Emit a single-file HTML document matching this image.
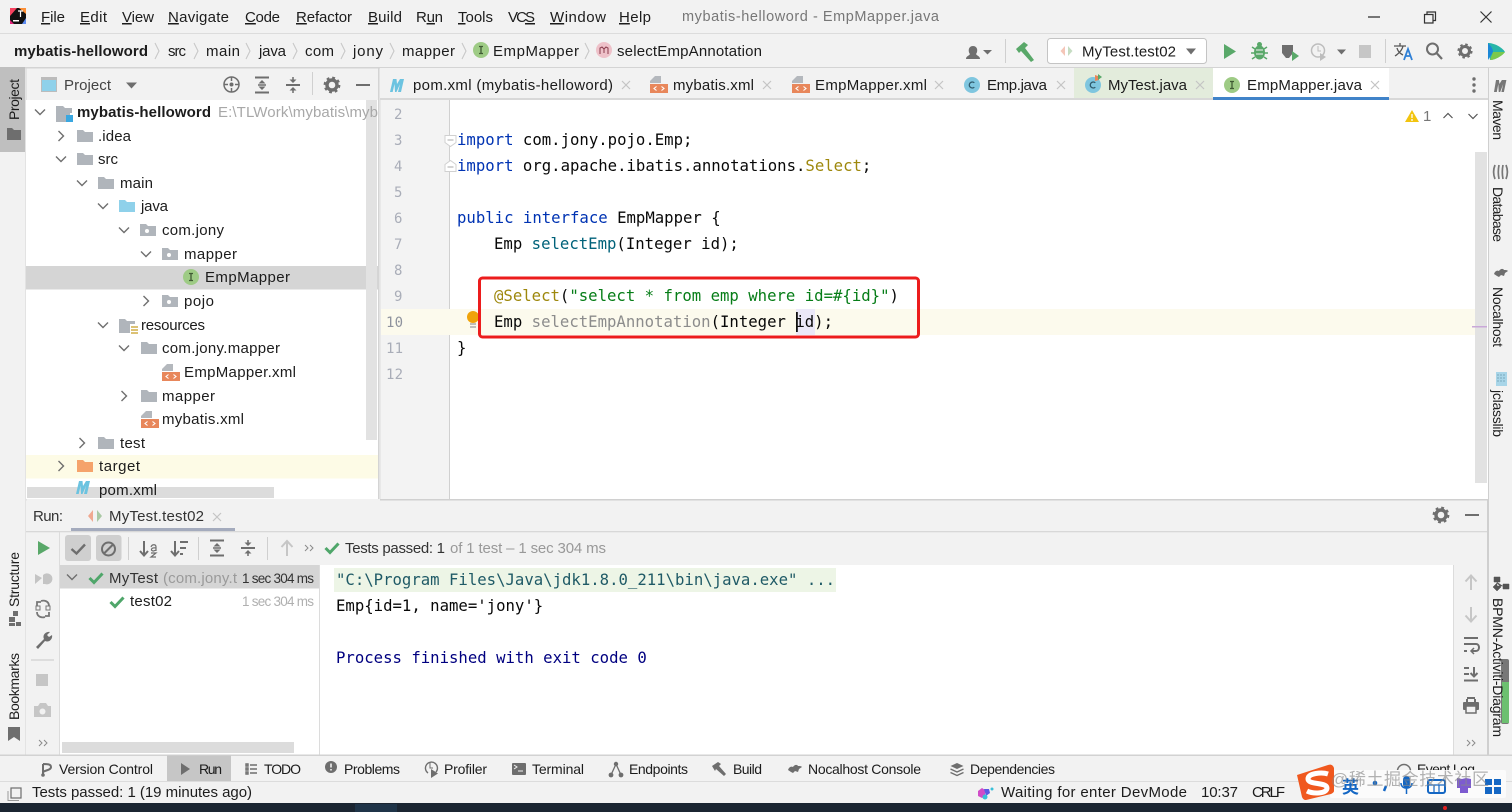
<!DOCTYPE html>
<html><head><meta charset="utf-8"><title>mybatis-helloword - EmpMapper.java</title>
<style>
html,body{margin:0;padding:0;background:#f2f2f2;overflow:hidden}
svg{display:block;position:absolute;left:0;top:0}
text{font-family:"Liberation Sans","Noto Sans CJK SC",sans-serif;font-size:15px;fill:#1c1c1c;white-space:pre}
.m{font-family:"DejaVu Sans Mono","Liberation Mono",monospace;font-size:15.65px;fill:#080808}
.n{font-family:"DejaVu Sans Mono","Liberation Mono",monospace;font-size:14px;fill:#a9adb8}
.b{font-size:14px}
.k{fill:#0033b3}.s{fill:#067d17}.a{fill:#9e880d}.f{fill:#00627a}.g{fill:#8c8c8c}
.u{text-decoration:underline}
.i{fill:#6e6e6e}
</style></head><body>
<svg width="1512" height="812" viewBox="0 0 1512 812" xmlns="http://www.w3.org/2000/svg">
<defs>
<path id="fo" d="M0 0h6l2 2h8v10H0z" fill="#b0b5bb"/>
<g id="pk"><path d="M0 0h6l2 2h8v10H0z" fill="#b0b5bb"/><circle cx="7" cy="7" r="2" fill="#fff"/></g>
<g id="xm"><path d="M5 0h6v7H0V5z" fill="#b4b8bd"/><rect x="0" y="8" width="18" height="9" fill="#e8875b"/><path d="M6.500 10.500l-2.500 2 2.500 2M11.500 10.500l2.500 2-2.500 2" stroke="#fff" stroke-width="1.100" fill="none"/></g>
<g id="ii"><circle cx="8" cy="8" r="8" fill="#9ecb85"/><path d="M6 4.500h4M6 11.500h4M8 4.500v7" stroke="#3f5a33" stroke-width="1.300"/></g>
<g id="cc"><circle cx="8" cy="8" r="8" fill="#7fc6df"/><path d="M10.300 5.800a3 3 0 1 0 0 4.400" stroke="#2f5a6c" stroke-width="1.300" fill="none"/></g>
<path id="cd" d="M-5-2.500L0 2.500 5-2.500" stroke="#6e6e6e" stroke-width="1.400" fill="none"/>
<path id="cr" d="M-2.500-5L2.500 0-2.500 5" stroke="#6e6e6e" stroke-width="1.400" fill="none"/>
<path id="tx" d="M-4-4L4 4M4-4L-4 4" stroke="#c4c4c4" stroke-width="1.200" fill="none"/>
<path id="ck" d="M-6.500 0L-2 4.500 6.500-4.500" stroke="#4fa66a" stroke-width="3" fill="none"/>
<path id="mm" d="M0 15L3 2h3.500L7 7l3-5h4l-3 13H8l2-8-3.500 8H5l-.5-8-1.800 8z" fill="#6cc3e0"/>
<g id="gr"><circle r="5" fill="none" stroke="#6e6e6e" stroke-width="3.400"/><circle r="7.200" fill="none" stroke="#6e6e6e" stroke-width="2.400" stroke-dasharray="2.800 2.850"/></g>
<g id="ex"><path d="M-7-7.500H7M-7 7.500H7" stroke="#6e6e6e" stroke-width="2"/><path d="M0-5l-3.500 3.500h7zM0 5l-3.500-3.500h7z" fill="#6e6e6e"/><path d="M-4 0H4" stroke="#6e6e6e" stroke-width="1.500"/></g>
<g id="co"><path d="M-7 0H7" stroke="#6e6e6e" stroke-width="2"/><path d="M0-2l-3.500-3.500h7zM0 2l-3.500 3.500h7z" fill="#6e6e6e"/><path d="M0-8v3M0 8V5" stroke="#6e6e6e" stroke-width="1.500"/></g>
<path id="dd" d="M-4-3L-1 0-4 3M1-3L4 0 1 3" stroke="#8a8a8a" stroke-width="1" fill="none"/>
</defs>

<!-- base -->
<rect width="1512" height="812" fill="#f2f2f2"/>
<rect x="0" y="33" width="1512" height="1" fill="#dcdcdc"/>
<rect x="0" y="67" width="1512" height="1.500" fill="#d4d4d4"/>

<!-- title bar -->
<g transform="translate(10,8)"><rect x="0" y="0" width="16" height="16" fill="#111"/><path d="M0 0h7L0 8z" fill="#f6425f"/><path d="M9 0h7v6z" fill="#fc8f36"/><path d="M0 12l4 4H0z" fill="#e3247b"/><path d="M12 16h4v-6z" fill="#5d8cf2"/><rect x="3" y="12" width="6" height="1.500" fill="#fff"/><path d="M8 3h5M10.500 3v6" stroke="#fff" stroke-width="1.200"/></g>
<text x="41" y="22" textLength="24"><tspan class="u">F</tspan>ile</text>
<text x="80" y="22" textLength="27"><tspan class="u">E</tspan>dit</text>
<text x="122" y="22" textLength="32"><tspan class="u">V</tspan>iew</text>
<text x="168" y="22" textLength="61"><tspan class="u">N</tspan>avigate</text>
<text x="245" y="22" textLength="35"><tspan class="u">C</tspan>ode</text>
<text x="296" y="22" textLength="56"><tspan class="u">R</tspan>efactor</text>
<text x="368" y="22" textLength="34"><tspan class="u">B</tspan>uild</text>
<text x="416" y="22" textLength="27">R<tspan class="u">u</tspan>n</text>
<text x="458" y="22" textLength="35"><tspan class="u">T</tspan>ools</text>
<text x="508" y="22" textLength="27">VC<tspan class="u">S</tspan></text>
<text x="550" y="22" textLength="56"><tspan class="u">W</tspan>indow</text>
<text x="619" y="22" textLength="32"><tspan class="u">H</tspan>elp</text>
<text x="682" y="21" textLength="257" style="fill:#777;font-size:14.500px">mybatis-helloword - EmpMapper.java</text>
<path d="M1368 17h12" stroke="#333" stroke-width="1.300"/>
<path d="M1424.500 14.500h8.500v8.500h-8.500zM1427 14.500V12h8.500v8.500H1433" stroke="#333" stroke-width="1.200" fill="none"/>
<path d="M1480.500 11.500l11 11M1491.500 11.500l-11 11" stroke="#333" stroke-width="1.200"/>

<!-- breadcrumb -->
<text x="14" y="56" textLength="134" style="font-weight:700">mybatis-helloword</text>
<text x="168" y="56" textLength="18">src</text>
<text x="206" y="56" textLength="34">main</text>
<text x="259" y="56" textLength="27">java</text>
<text x="305" y="56" textLength="29">com</text>
<text x="353" y="56" textLength="30">jony</text>
<text x="402" y="56" textLength="53">mapper</text>
<text x="493" y="56" textLength="86">EmpMapper</text>
<text x="617" y="56" textLength="145">selectEmpAnnotation</text>
<g fill="none" stroke="#c8c8c8" stroke-width="1.100"><path d="M155 43l4 8-4 8M194 43l4 8-4 8M246 43l4 8-4 8M293 43l4 8-4 8M341 43l4 8-4 8M390 43l4 8-4 8M462 43l4 8-4 8M585 43l4 8-4 8"/></g>
<use href="#ii" x="473" y="42"/>
<circle cx="604" cy="50" r="8" fill="#eec1c9"/><path d="M600 54v-6l2-1 2 2 2-2 2 1v6M604 49v4" stroke="#8a3b4b" stroke-width="1" fill="none"/>

<!-- main toolbar -->
<path d="M966 59c0-3 3-3 4-5-2-2-2-8 3-8s5 6 3 8c1 2 4 2 4 5z" fill="#6e6e6e"/><path d="M983 50l4.500 4.500L992 50z" fill="#6e6e6e"/>
<rect x="1005" y="39" width="1" height="24" fill="#cfcfcf"/>
<path d="M1016 49l8-7 4 3-3 3 9 12-3 2-10-11-2 2z" fill="#59a869"/>
<rect x="1047.500" y="38.500" width="159" height="25" rx="3" fill="#fff" stroke="#c4c4c4"/>
<path d="M1065 46l-4.500 5 4.500 5z" fill="#f4c6b8"/><path d="M1068 46l4.500 5-4.500 5z" fill="#c5dcc2"/>
<text x="1082" y="56.500" textLength="94">MyTest.test02</text>
<path d="M1186 48.500h10l-5 6z" fill="#6e6e6e"/>
<path d="M1224 44v15l12-7.500z" fill="#59a869"/>
<g fill="#59a869"><ellipse cx="1259.500" cy="52.500" rx="5.500" ry="7"/><circle cx="1259.500" cy="44.500" r="2.500"/></g><path d="M1252 47l3 2M1267 47l-3 2M1251 53h4M1268 53h-4M1252 59l3-2M1267 59l-3-2" stroke="#59a869" stroke-width="1.500"/><path d="M1256 50h7M1256 54h7" stroke="#f2f2f2"/>
<path d="M1282 45h11v8l-4 5h-3l-4-5z" fill="#6e6e6e"/><path d="M1292 51v10l7-5z" fill="#59a869"/>
<circle cx="1318" cy="50.500" r="6.500" fill="none" stroke="#bdbdbd" stroke-width="1.500"/><path d="M1318 46v5h3" stroke="#bdbdbd" fill="none"/><path d="M1320 53v8l6-4z" fill="#bdbdbd"/>
<path d="M1337 49.500h9l-4.500 5z" fill="#6e6e6e"/>
<rect x="1359" y="45" width="12" height="13" fill="#c6c6c6"/>
<rect x="1385" y="39" width="1" height="24" fill="#cfcfcf"/>
<path d="M1394 46h12M1400 43v3M1403 46c-1 5-5 8-8 10M1397 48c1 4 4 6 6 7" stroke="#555" stroke-width="1.300" fill="none"/><path d="M1404 60l4-11 4 11M1405.500 56h5" stroke="#2f80d6" stroke-width="1.800" fill="none"/>
<circle cx="1432.500" cy="49" r="5.500" fill="none" stroke="#6e6e6e" stroke-width="2"/><path d="M1437 53.500l5 5.500" stroke="#6e6e6e" stroke-width="2.200"/>
<g transform="translate(1465,51) scale(.9)"><use href="#gr"/></g>
<path d="M1488 43c6 0 14 4 17 9-3 4-10 8-15 8z" fill="#28b6a8"/><path d="M1488 43c3 3 5 6 5 9l-5 8z" fill="#1b87d6"/><path d="M1493 52l12 0c-3 4-10 8-15 8z" fill="#7cc84c"/>

<!-- left strip -->
<rect x="25.500" y="68" width="1" height="687" fill="#d4d4d4"/>
<rect x="0" y="67" width="25" height="85" fill="#bfbfbf"/>
<text class="b" transform="translate(19,120) rotate(-90)" textLength="41">Project</text>
<path d="M7 128h5l2 2h7v10H7z" fill="#6e6e6e"/>
<text class="b" transform="translate(19,607) rotate(-90)" textLength="55">Structure</text>
<path d="M9 622h6v-5H9zM9 626h6v-3H9zM16 626h5v-4h-5zM13 616h5v-5h-5z" fill="#6e6e6e"/>
<text class="b" transform="translate(19,720) rotate(-90)" textLength="67">Bookmarks</text>
<path d="M8 727h12v14l-6-4-6 4z" fill="#6e6e6e"/>

<!-- project panel -->
<rect x="26" y="100" width="352" height="399" fill="#fff"/>
<rect x="41" y="77" width="16" height="15" fill="#bcbcbc"/><rect x="42" y="80" width="14" height="11" fill="#8fd1ea"/>
<text x="64" y="90" textLength="47" style="fill:#444">Project</text>
<path d="M126 82.500h11l-5.500 6z" fill="#6e6e6e"/>
<circle cx="231.500" cy="84.500" r="7.500" fill="none" stroke="#6e6e6e" stroke-width="1.500"/><circle cx="231.500" cy="84.500" r="2" class="i"/><path d="M231.500 77v4M231.500 88v4M224 84.500h4M235 84.500h4" stroke="#6e6e6e" stroke-width="1.500"/>
<use href="#ex" x="262" y="85"/><use href="#co" x="293" y="85"/>
<rect x="312" y="72" width="1" height="23" fill="#d0d0d0"/>
<use href="#gr" x="332" y="85"/>
<path d="M356 85h14" stroke="#6e6e6e" stroke-width="2"/>
<rect x="378" y="68" width="1.500" height="431" fill="#d4d4d4"/>

<rect x="26" y="266" width="352" height="23.500" fill="#d5d5d5"/>
<rect x="26" y="455" width="352" height="23.500" fill="#fdfbe6"/>
<rect x="366" y="100" width="11" height="340" fill="#e2e2e2"/>

<g>
<use href="#cd" x="40" y="112"/><use href="#cr" x="61" y="136"/><use href="#cd" x="61" y="159"/><use href="#cd" x="82" y="183"/><use href="#cd" x="103" y="206"/><use href="#cd" x="124" y="230"/><use href="#cd" x="146" y="254"/><use href="#cr" x="146" y="301"/><use href="#cd" x="103" y="325"/><use href="#cd" x="124" y="348"/><use href="#cr" x="124" y="396"/><use href="#cr" x="82" y="443"/><use href="#cr" x="61" y="466"/>
</g>
<path d="M56 106h7l2 2h7v5h-2v9H56z" fill="#b0b5bb"/><rect x="66" y="115" width="7" height="7" fill="#3aa7e0"/>
<use href="#fo" x="77" y="130"/><use href="#fo" x="77" y="153"/><use href="#fo" x="98" y="177"/>
<path d="M119 200h6l2 2h8v10h-16z" fill="#8fd1ea"/>
<use href="#pk" x="140" y="224"/><use href="#pk" x="162" y="248"/><use href="#ii" x="183" y="269"/><use href="#pk" x="162" y="295"/>
<path d="M119 319h6l2 2h8v3h-5v9h-11z" fill="#b0b5bb"/><path d="M131 327h7M131 330h7M131 333h7" stroke="#d8b960" stroke-width="1.800"/>
<use href="#fo" x="141" y="342"/><use href="#xm" x="162" y="364"/><use href="#fo" x="141" y="390"/><use href="#xm" x="141" y="411"/><use href="#fo" x="98" y="437"/>
<path d="M77 460h6l2 2h8v10H77z" fill="#f5a36b"/>

<text x="77" y="117" textLength="134" style="font-weight:700">mybatis-helloword</text>
<text x="218" y="117" textLength="160" style="fill:#a8a8a8">E:\TLWork\mybatis\myb</text>
<text x="98" y="141" textLength="33">.idea</text>
<text x="98" y="164" textLength="20">src</text>
<text x="120" y="188" textLength="33">main</text>
<text x="141" y="211" textLength="27">java</text>
<text x="162" y="235" textLength="62">com.jony</text>
<text x="184" y="259" textLength="53">mapper</text>
<text x="205" y="282" textLength="85">EmpMapper</text>
<text x="184" y="306" textLength="30">pojo</text>
<text x="141" y="330" textLength="64">resources</text>
<text x="162" y="353" textLength="118">com.jony.mapper</text>
<text x="184" y="377" textLength="112">EmpMapper.xml</text>
<text x="162" y="401" textLength="53">mapper</text>
<text x="162" y="424" textLength="82">mybatis.xml</text>
<text x="120" y="448" textLength="25">test</text>
<text x="99" y="471" textLength="41">target</text>
<rect x="27" y="487" width="247" height="11" fill="#dcdcdc"/>
<use href="#mm" x="76" y="479"/>
<text x="99" y="495" textLength="58">pom.xml</text>

<!-- tabs -->
<rect x="380" y="68" width="1108" height="30" fill="#f2f2f2"/>
<rect x="1074" y="68" width="139" height="30" fill="#e3ecdc"/>
<rect x="1213" y="68" width="176" height="29" fill="#fff"/>
<rect x="380" y="98" width="1108" height="2" fill="#d8d8d8"/>
<rect x="1213" y="97" width="176" height="3.500" fill="#4083c9"/>
<use href="#mm" x="390" y="77"/>
<text x="413" y="90" textLength="200">pom.xml (mybatis-helloword)</text><use href="#tx" x="626" y="85"/>
<use href="#xm" x="650" y="76"/>
<text x="673" y="90" textLength="81">mybatis.xml</text><use href="#tx" x="767" y="85"/>
<use href="#xm" x="792" y="76"/>
<text x="815" y="90" textLength="112">EmpMapper.xml</text><use href="#tx" x="939" y="85"/>
<use href="#cc" x="964" y="77"/>
<text x="987" y="90" textLength="60">Emp.java</text><use href="#tx" x="1061" y="85"/>
<use href="#cc" x="1085" y="77"/><path d="M1095 75l3 1 1 4-4 1z" fill="#e8875b"/><path d="M1098 74l4 3-4 3z" fill="#59a869"/>
<text x="1108" y="90" textLength="79">MyTest.java</text><use href="#tx" x="1200" y="85"/>
<use href="#ii" x="1224" y="77"/>
<text x="1247" y="90" textLength="115">EmpMapper.java</text><use href="#tx" x="1375" y="85"/>
<g class="i"><circle cx="1474" cy="79" r="1.700"/><circle cx="1474" cy="85" r="1.700"/><circle cx="1474" cy="91" r="1.700"/></g>

<!-- editor -->
<rect x="380" y="100" width="1108" height="399" fill="#fff"/>
<rect x="380" y="100" width="69" height="399" fill="#f3f3f3"/>
<rect x="449" y="100" width="1" height="399" fill="#d0d0d0"/>
<rect x="380" y="309" width="1096" height="26" fill="#fcfaed"/>
<rect x="1475" y="152" width="12" height="331" fill="#e2e2e2"/>
<rect x="1472" y="326" width="15" height="1.500" fill="#c9a8d8"/>
<rect x="380" y="499" width="1132" height="1.500" fill="#d0d0d0"/>
<rect x="380" y="100" width="1" height="399" fill="#e8e8e8"/>

<text class="n" x="394" y="119">2</text>
<text class="n" x="394" y="145">3</text>
<text class="n" x="394" y="171">4</text>
<text class="n" x="394" y="197">5</text>
<text class="n" x="394" y="223">6</text>
<text class="n" x="394" y="249">7</text>
<text class="n" x="394" y="275">8</text>
<text class="n" x="394" y="301">9</text>
<text class="n" x="386" y="327" textLength="17" style="fill:#8f939e">10</text>
<text class="n" x="386" y="353" textLength="17">11</text>
<text class="n" x="386" y="379" textLength="17">12</text>

<path d="M445 135.500h11v7l-5.500 4-5.500-4z" fill="#fff" stroke="#d0d0d0"/><path d="M447.500 140h6" stroke="#aaa"/>
<path d="M445 171.500h11v-7l-5.500-4-5.500 4z" fill="#fff" stroke="#d0d0d0"/><path d="M447.500 167h6" stroke="#aaa"/>

<rect x="796" y="309" width="19" height="26" fill="#ebe8f8"/>
<text class="m" x="457" y="145"><tspan class="k">import</tspan> com.jony.pojo.Emp;</text>
<text class="m" x="457" y="171"><tspan class="k">import</tspan> org.apache.ibatis.annotations.<tspan class="a">Select</tspan>;</text>
<text class="m" x="457" y="223"><tspan class="k">public interface</tspan> EmpMapper {</text>
<text class="m" x="494" y="249">Emp <tspan class="f">selectEmp</tspan>(Integer id);</text>
<text class="m" x="494" y="301"><tspan class="a">@Select</tspan>(<tspan class="s">"select * from emp where id=#{id}"</tspan>)</text>
<text class="m" x="494" y="327">Emp <tspan class="g">selectEmpAnnotation</tspan>(Integer id);</text>
<rect x="796" y="312" width="1.800" height="20" fill="#111"/>
<text class="m" x="457" y="353">}</text>
<circle cx="473" cy="317" r="6" fill="#f0a30a"/><path d="M470 324h6M470 327h6" stroke="#9a9a9a" stroke-width="1.300"/>
<rect x="479.500" y="278" width="439" height="59" rx="3" fill="none" stroke="#ec1c1c" stroke-width="3"/>

<path d="M1405 122l7-12 7 12z" fill="#f2c40f"/><path d="M1412 114v4M1412 119v2" stroke="#fff" stroke-width="1.300"/>
<text x="1423" y="121" textLength="7" style="fill:#777">1</text>
<path d="M1443.500 118l4.500-4.500 4.500 4.500M1468.500 114l4.500 4.500 4.500-4.500" stroke="#555" stroke-width="1.200" fill="none"/>

<!-- right strip -->
<rect x="1488" y="68" width="24" height="687" fill="#f2f2f2"/>
<rect x="1488" y="68" width="1" height="687" fill="#cfcfcf"/>
<path d="M1494 92l2-12h3l.4 4 2.500-4h3.500l1-0-2.500 12h-2.500l1.800-8-3 8h-1.500l-.4-8-1.500 8z" fill="#777"/>
<text class="b" transform="translate(1493,100) rotate(90)" textLength="40">Maven</text>
<g fill="none" stroke="#777" stroke-width="1.700"><path d="M1495 165c-2 5-2 9 0 14M1499 165c-1 5-1 9 0 14M1503 165c-1 5-1 9 0 14M1506 165c2 5 2 9 0 14"/></g>
<text class="b" transform="translate(1493,187) rotate(90)" textLength="55">Database</text>
<path d="M1494 274c1-3 3-4 5-3 1-2 4-3 5-1 2 0 3 0 4 1l-3 2-1 3-3-1-2 2-2-1z" fill="#6e6e6e"/>
<text class="b" transform="translate(1493,287) rotate(90)" textLength="60">Nocalhost</text>
<rect x="1496" y="372" width="11" height="14" fill="#a8d5e8"/><path d="M1497 375h9M1497 378h9M1497 381h9" stroke="#7aa9bd" stroke-dasharray="2 1"/>
<text class="b" transform="translate(1493,390) rotate(90)" textLength="47">jclasslib</text>
<path d="M1494 577h6v5h-6zM1503 584h6v5h-6zM1497 582v4h6M1497 583l4 4-4 4-4-4z" fill="#555" stroke="#555" stroke-width=".5"/>
<rect x="1501" y="659" width="8" height="65" rx="2" fill="#777"/>
<rect x="1502" y="682" width="7" height="41" fill="#6cc070"/>
<text class="b" transform="translate(1493,598) rotate(90)" textLength="139">BPMN-Activiti-Diagram</text>

<!-- run panel -->
<rect x="26" y="500.500" width="1461" height="254.500" fill="#f2f2f2"/>
<rect x="26" y="531" width="1461" height="1.300" fill="#d8d8d8"/>
<rect x="1487" y="500" width="1.300" height="255" fill="#cfcfcf"/>
<text x="33" y="521" textLength="30" style="fill:#333">Run:</text>
<path d="M93 510l-5 6 5 6z" fill="#f0a890"/><path d="M97 510l5 6-5 6z" fill="#a9c8a4"/>
<text x="109" y="521" textLength="95" style="fill:#333">MyTest.test02</text><use href="#tx" x="217" y="517"/>
<rect x="71" y="528" width="164" height="3" fill="#a4abbd"/>
<use href="#gr" x="1441" y="515"/><path d="M1465 515h14" stroke="#6e6e6e" stroke-width="2"/>

<rect x="59" y="532" width="1" height="223" fill="#dcdcdc"/>
<path d="M38 541v14l12-7z" fill="#59a869"/>
<path d="M35 574l7 4-7 6zM43 575a5.500 5.500 0 1 1 2 9l-2 0z" fill="#c4c4c4"/>
<path d="M37 606v-4h4M37 612c0 5 5 6 8 5M49 606c0-5-5-6-8-5M49 612v4h-4" stroke="#777" stroke-width="1.800" fill="none"/><rect x="36" y="606" width="4" height="4" fill="none" stroke="#777"/><rect x="46" y="606" width="4" height="4" fill="none" stroke="#777"/>
<path d="M36 647l8-8c-2-4 2-8 6-7l-3 3 2 2 3-2c1 4-3 8-7 6l-7 8z" fill="#6e6e6e"/>
<rect x="31" y="659.500" width="23" height="1" fill="#c8c8c8"/>
<rect x="36" y="674" width="12" height="12" fill="#c6c6c6"/>
<path d="M34 706h4l2-3h6l2 3h3v11H34z" fill="#c6c6c6"/><circle cx="42.500" cy="711.500" r="3" fill="#f2f2f2"/>
<use href="#dd" x="43" y="743"/>

<rect x="65" y="535" width="26" height="26" rx="3" fill="#cfcfcf"/>
<path d="M71.500 549l5 4.500 8.500-9" stroke="#6e6e6e" stroke-width="2.400" fill="none"/>
<rect x="96" y="535" width="25.500" height="26" rx="3" fill="#cfcfcf"/>
<circle cx="108.500" cy="549" r="6.500" fill="none" stroke="#6e6e6e" stroke-width="2"/><path d="M104 553.500l9-9" stroke="#6e6e6e" stroke-width="2"/>
<rect x="128" y="537" width="1" height="23" fill="#cfcfcf"/>
<path d="M144 541v14M140 551l4 4.500 4-4.500" stroke="#6e6e6e" stroke-width="2" fill="none"/><path d="M151 547c1-3 5-3 5 0v4M156 548c-5-1-6 3-2.500 3l2.500-1M151 553h5l-5 4h5" stroke="#6e6e6e" stroke-width="1.200" fill="none"/>
<path d="M175 541v14M171 551l4 4.500 4-4.500" stroke="#6e6e6e" stroke-width="2" fill="none"/><path d="M180 542h8M180 548h6M180 554h3" stroke="#6e6e6e" stroke-width="2"/>
<rect x="198" y="537" width="1" height="23" fill="#cfcfcf"/>
<use href="#ex" x="217" y="548"/><use href="#co" x="248" y="548"/>
<rect x="267" y="537" width="1" height="23" fill="#cfcfcf"/>
<path d="M287 556v-14M281.500 547l5.500-6 5.500 6" stroke="#c6c6c6" stroke-width="2" fill="none"/>
<use href="#dd" x="309" y="548"/>
<use href="#ck" x="332" y="548"/>
<text x="345" y="553" textLength="100" style="fill:#333">Tests passed: 1</text>
<text x="450" y="553" textLength="156" style="fill:#999">of 1 test – 1 sec 304 ms</text>

<rect x="60" y="565" width="259" height="190" fill="#fff"/>
<rect x="60" y="565" width="259" height="23.500" fill="#d5d5d5"/>
<rect x="319" y="565" width="1" height="190" fill="#dcdcdc"/>
<use href="#cd" x="72" y="577"/>
<use href="#ck" x="96" y="578"/>
<text x="109" y="583" textLength="49" style="fill:#333">MyTest</text>
<text x="163" y="583" textLength="74" style="fill:#9a9a9a">(com.jony.t</text>
<text x="242" y="583" textLength="72" style="font-size:13.500px;fill:#333">1 sec 304 ms</text>
<use href="#ck" x="117" y="602"/>
<text x="130" y="606" textLength="42">test02</text>
<text x="242" y="606" textLength="72" style="font-size:13.500px;fill:#b0b0b0">1 sec 304 ms</text>
<rect x="62" y="742" width="232" height="11" fill="#dcdcdc"/>

<rect x="320" y="565" width="1133" height="190" fill="#fff"/>
<rect x="1453" y="565" width="1" height="190" fill="#dcdcdc"/>
<rect x="334" y="568" width="502" height="24" fill="#edf5e6"/>
<text class="m" x="336" y="585" style="fill:#1f5a66">"C:\Program Files\Java\jdk1.8.0_211\bin\java.exe" ...</text>
<text class="m" x="336" y="611">Emp{id=1, name='jony'}</text>
<text class="m" x="336" y="663" style="fill:#000080">Process finished with exit code 0</text>

<path d="M1471 590v-14M1465.500 581.500l5.500-6 5.500 6" stroke="#c6c6c6" stroke-width="2" fill="none"/>
<path d="M1471 607v14M1465.500 615.500l5.500 6 5.500-6" stroke="#c6c6c6" stroke-width="2" fill="none"/>
<path d="M1464 638h14M1464 644h12c4 0 4 7 0 7h-4M1464 651h3" stroke="#6e6e6e" stroke-width="2" fill="none"/><path d="M1474 648l-3 3 3 3" stroke="#6e6e6e" stroke-width="1.500" fill="none"/>
<path d="M1464 668h5M1464 674h5M1464 680.500h14M1474 667v9M1470.500 673l3.500 3.500 3.500-3.500" stroke="#6e6e6e" stroke-width="2" fill="none"/>
<path d="M1467 699v4M1475 699v4M1467 698h8" stroke="#6e6e6e" stroke-width="2" fill="none"/><rect x="1463" y="702" width="16" height="8" rx="1" fill="#6e6e6e"/><rect x="1466" y="706" width="10" height="7" fill="#f2f2f2" stroke="#6e6e6e" stroke-width="1.500"/>
<use href="#dd" x="1471" y="743"/>

<!-- bottom bar -->
<rect x="0" y="754.500" width="1512" height="1.500" fill="#d2d2d2"/>
<rect x="0" y="781" width="1512" height="1" fill="#dcdcdc"/>
<rect x="167" y="755.500" width="64" height="25.500" fill="#c6c6c6"/>
<path d="M43 764v11M43 764c4 0 8 0 8 3s-5 3-8 5" stroke="#6e6e6e" stroke-width="2" fill="none"/><circle cx="43" cy="775" r="1.800" class="i"/>
<text class="b" x="59" y="774" textLength="94">Version Control</text>
<path d="M181 763v12l9-6z" class="i"/>
<text class="b" x="199" y="774" textLength="23">Run</text>
<path d="M246 764h2v2h-2zM246 768h2v2h-2zM246 772h2v2h-2zM250 765h7M250 769h7M250 773h7" stroke="#6e6e6e" stroke-width="1.400" fill="none"/>
<text class="b" x="264" y="774" textLength="37">TODO</text>
<circle cx="331" cy="767" r="6" class="i"/><path d="M331 763.500v4M331 769v1.500" stroke="#f2f2f2" stroke-width="1.600"/>
<text class="b" x="344" y="774" textLength="56">Problems</text>
<path d="M436 772a6 6 0 1 0-8 1" fill="none" stroke="#6e6e6e" stroke-width="1.400"/><path d="M430 763v5h3" stroke="#6e6e6e" fill="none"/><path d="M431 769v9l7-4.500z" class="i"/>
<text class="b" x="444" y="774" textLength="43">Profiler</text>
<rect x="512" y="763" width="14" height="12" rx="1" class="i"/><path d="M514 765l3 2-3 2M518 771h5" stroke="#f2f2f2" fill="none"/>
<text class="b" x="532" y="774" textLength="52">Terminal</text>
<circle cx="616" cy="764" r="2.200" class="i"/><circle cx="611" cy="775" r="2.400" class="i"/><circle cx="621" cy="775" r="2.400" class="i"/><path d="M616 764l-5 11M616 764l5 11" stroke="#6e6e6e" stroke-width="1.300"/>
<text class="b" x="629" y="774" textLength="59">Endpoints</text>
<path d="M712 766l6-4 3 2-2 2 7 8-2 2-8-7-1 2z" class="i"/>
<text class="b" x="733" y="774" textLength="29">Build</text>
<path d="M788 770c1-3 3-4 5-3 1-2 4-3 5-1 2 0 3 0 4 1l-3 2-1 3-3-1-2 2-2-1z" class="i"/>
<text class="b" x="808" y="774" textLength="113">Nocalhost Console</text>
<path d="M957 763l6.500 3-6.500 3-6.500-3z" class="i"/><path d="M950.500 769l6.500 3 6.500-3M950.500 772.500l6.500 3 6.500-3" stroke="#6e6e6e" stroke-width="1.300" fill="none"/>
<text class="b" x="970" y="774" textLength="85">Dependencies</text>
<circle cx="1404" cy="771" r="6.500" fill="none" stroke="#6e6e6e" stroke-width="1.500"/>
<text class="b" x="1417" y="774" textLength="58">Event Log</text>

<!-- status -->
<rect x="11" y="788" width="10" height="10" fill="none" stroke="#6e6e6e" stroke-width="1.200"/><path d="M8 791v9.500h11" stroke="#999" fill="none"/>
<text x="32" y="797" textLength="220">Tests passed: 1 (19 minutes ago)</text>
<path d="M978 791l4-3 3 2v6l-3 2-4-2z" fill="#d04cc8"/><path d="M984 789l5 0 1 4-4 3z" fill="#5a5ae6"/><circle cx="985" cy="797" r="2.500" fill="#38c0d8"/><circle cx="992" cy="789" r="1.500" fill="#38c0d8"/>
<text x="1001" y="797" textLength="186">Waiting for enter DevMode</text>
<text x="1201" y="797" textLength="37">10:37</text>
<text x="1252" y="797" textLength="33">CRLF</text>
<rect x="0" y="803" width="1512" height="9" fill="#1b2531"/>
<rect x="355" y="804" width="42" height="8" fill="#1f3448"/>

<!-- IME -->
<rect x="1330" y="770" width="176" height="28" rx="2" fill="#fbfbfb"/>
<path d="M1297 775l31-10c3-1 5 0 6 3l0 23c0 1-1 2-3 3l-25 6c-2 0-3-1-4-3z" fill="#f0581e"/>
<path d="M1328 774c-6-2-20-1-20 5 0 6 19 3 19 9 0 6-14 6-20 3" fill="none" stroke="#fff" stroke-width="5"/>
<text x="1342" y="793" style="font-size:17px;font-weight:700;fill:#1467c4">英</text>
<circle cx="1375" cy="783" r="2.300" fill="#1467c4"/><path d="M1386 786l-2 5" stroke="#1467c4" stroke-width="2.500"/>
<rect x="1403" y="776" width="7" height="12" rx="3.500" fill="#1467c4"/><path d="M1401 783c0 7 11 7 11 0M1406.500 789v5" stroke="#1467c4" stroke-width="1.500" fill="none"/>
<rect x="1428" y="780" width="17" height="13" rx="2" fill="none" stroke="#1467c4" stroke-width="2"/><path d="M1428 785h17M1434 785v7M1439 785v7" stroke="#1467c4" stroke-width="1.200"/>
<path d="M1457 778l5 1 4-1 5 1v9h-3v5h-8v-5h-3z" fill="#7d5bd0"/>
<path d="M1485 779h7v6h-7zM1494 779h7v6h-7zM1485 787h7v7h-7zM1494 787h7v7h-7z" fill="#1467c4"/>
<text x="1331" y="785" textLength="158" style="font-size:17px;fill:#888;fill-opacity:.65">@稀土掘金技术社区</text>
<circle cx="1445" cy="808" r="2" fill="#e02020"/>
</svg>
</body></html>
